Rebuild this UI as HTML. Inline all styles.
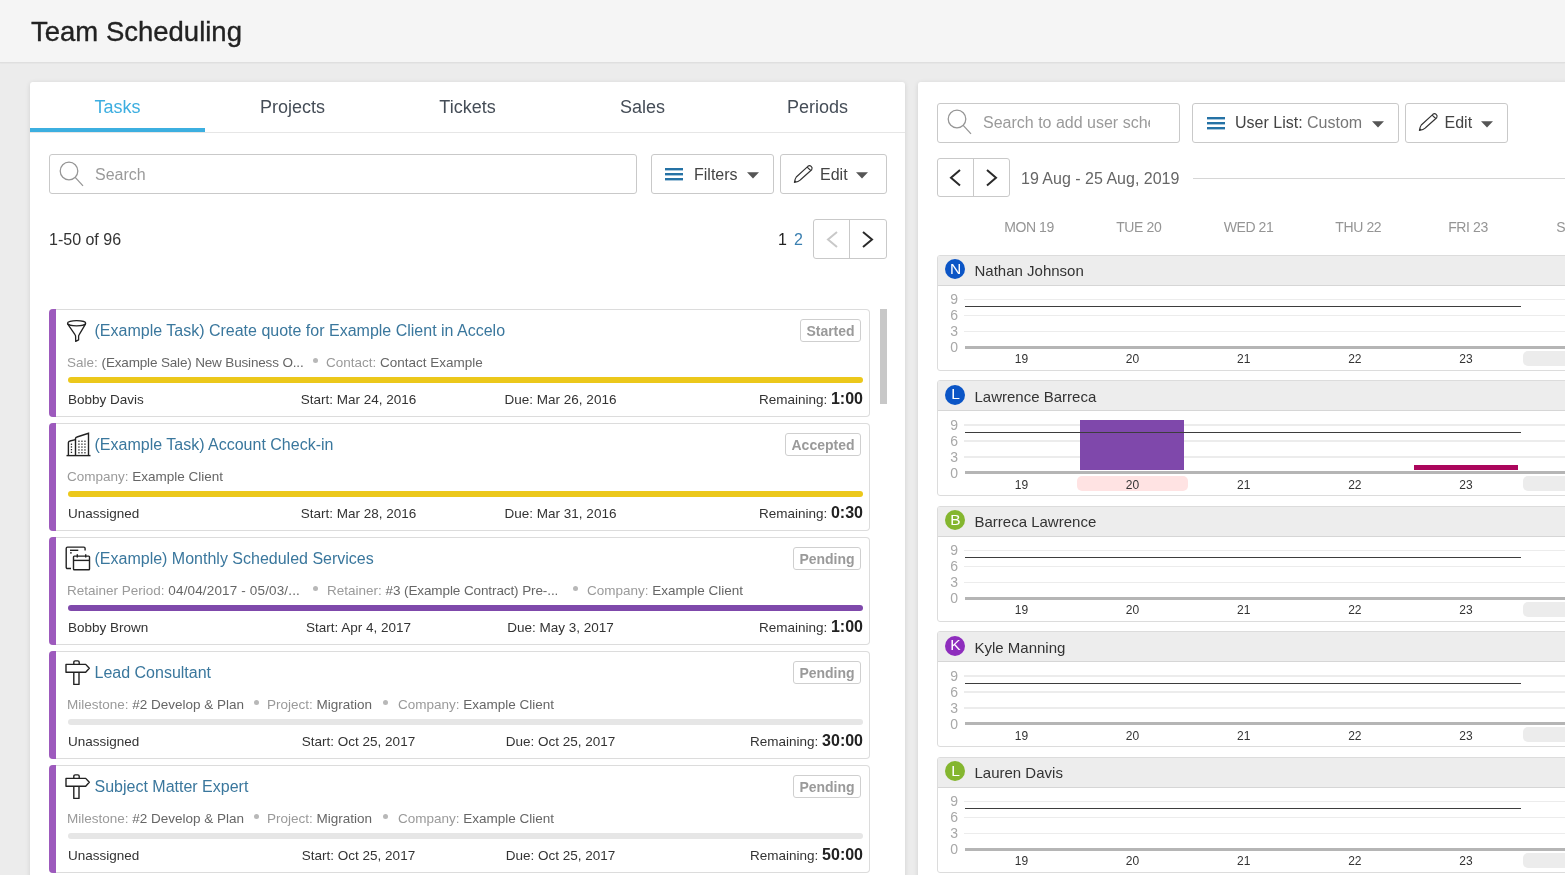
<!DOCTYPE html>
<html><head><meta charset="utf-8"><title>Team Scheduling</title>
<style>
html,body{margin:0;padding:0;}
body{width:1565px;height:875px;overflow:hidden;background:#ececec;position:relative;font-family:"Liberation Sans",sans-serif;}
.t{position:absolute;white-space:nowrap;}
.r{position:absolute;}
svg.r{overflow:visible;}
#w{position:absolute;left:0;top:0;width:1565px;height:875px;overflow:hidden;will-change:transform;}
</style></head><body>
<div id="w">
<div class="r" style="left:0px;top:0px;width:1565px;height:62px;background:#f5f5f5;"></div>
<div class="r" style="left:0px;top:62px;width:1565px;height:1px;background:#dfdfdf;box-shadow:0 1px 1px rgba(0,0,0,0.03);"></div>
<div class="t" style="left:31px;top:18.22px;font-size:27.5px;line-height:27.5px;color:#222;font-weight:normal;-webkit-text-stroke:0.35px #222;">Team Scheduling</div>
<div class="r" style="left:30px;top:82px;width:875px;height:900px;background:#fff;border-radius:3px;box-shadow:0 1px 5px rgba(0,0,0,0.12);"></div>
<div class="t" style="left:117.5px;transform:translateX(-50%);top:97.66px;font-size:18px;line-height:18px;color:#3daee0;font-weight:normal;">Tasks</div>
<div class="t" style="left:292.5px;transform:translateX(-50%);top:97.66px;font-size:18px;line-height:18px;color:#454d57;font-weight:normal;">Projects</div>
<div class="t" style="left:467.5px;transform:translateX(-50%);top:97.66px;font-size:18px;line-height:18px;color:#454d57;font-weight:normal;">Tickets</div>
<div class="t" style="left:642.5px;transform:translateX(-50%);top:97.66px;font-size:18px;line-height:18px;color:#454d57;font-weight:normal;">Sales</div>
<div class="t" style="left:817.5px;transform:translateX(-50%);top:97.66px;font-size:18px;line-height:18px;color:#454d57;font-weight:normal;">Periods</div>
<div class="r" style="left:30px;top:132px;width:875px;height:1px;background:#e6e6e6;"></div>
<div class="r" style="left:30px;top:128px;width:175px;height:4px;background:#3cafe0;"></div>
<div class="r" style="left:49px;top:154px;width:588px;height:40px;box-sizing:border-box;border:1px solid #c9c9c9;border-radius:3px;background:#fff;"></div>
<svg class="r" style="left:58px;top:160.3px" width="28" height="28" viewBox="0 0 28 28"><circle cx="11" cy="11" r="8.8" fill="none" stroke="#959595" stroke-width="1.25"/><line x1="17.2" y1="17.3" x2="25" y2="25.8" stroke="#959595" stroke-width="1.25"/></svg>
<div class="t" style="left:95px;top:167.35px;font-size:16px;line-height:16px;color:#9a9a9a;font-weight:normal;">Search</div>
<div class="r" style="left:651px;top:154px;width:123px;height:40px;box-sizing:border-box;border:1px solid #c9c9c9;border-radius:3px;"></div>
<svg class="r" style="left:665px;top:167px" width="18" height="14" viewBox="0 0 18 14"><rect x="0" y="1" width="18" height="2.4" fill="#2572a5"/><rect x="0" y="6" width="18" height="2.4" fill="#2572a5"/><rect x="0" y="11" width="18" height="2.4" fill="#2572a5"/></svg>
<div class="t" style="left:694px;top:167.35px;font-size:16px;line-height:16px;color:#444;font-weight:normal;">Filters</div>
<svg class="r" style="left:747px;top:171.5px" width="12" height="7" viewBox="0 0 12 7"><path d="M0 0.3H12L6 6.5Z" fill="#555"/></svg>
<div class="r" style="left:780px;top:154px;width:107px;height:40px;box-sizing:border-box;border:1px solid #c9c9c9;border-radius:3px;"></div>
<svg class="r" style="left:794px;top:164px" width="20" height="20" viewBox="0 0 20 20"><path d="M0.4 18.4 Q0.9 14.8 2.3 13 L13.9 2.3 A2.6 2.6 0 0 1 17.7 5.7 L6.5 15.8 Q4.5 17.8 0.4 18.4 Z M13.4 3.3 L16.7 6.5" fill="none" stroke="#333" stroke-width="1.15" stroke-linejoin="round"/><path d="M0.4 18.4 L1 16.3 L2.5 17.8 Z" fill="#333"/></svg>
<div class="t" style="left:820px;top:167.35px;font-size:16px;line-height:16px;color:#444;font-weight:normal;">Edit</div>
<svg class="r" style="left:856px;top:171.5px" width="12" height="7" viewBox="0 0 12 7"><path d="M0 0.3H12L6 6.5Z" fill="#555"/></svg>
<div class="t" style="left:49px;top:232.35px;font-size:16px;line-height:16px;color:#333;font-weight:normal;">1-50 of 96</div>
<div class="t" style="left:778px;top:232.35px;font-size:16px;line-height:16px;color:#222;font-weight:normal;">1</div>
<div class="t" style="left:794px;top:232.35px;font-size:16px;line-height:16px;color:#3a7fb0;font-weight:normal;">2</div>
<div class="r" style="left:813px;top:219px;width:74px;height:40px;box-sizing:border-box;border:1px solid #c9c9c9;border-radius:3px;"></div>
<div class="r" style="left:849px;top:219px;width:1px;height:40px;background:#c9c9c9;"></div>
<svg class="r" style="left:827px;top:230.5px" width="11" height="17" viewBox="0 0 11 17"><path d="M10 1 L1 8.5 L10 16" fill="none" stroke="#c8c8c8" stroke-width="2"/></svg>
<svg class="r" style="left:861.8px;top:230.5px" width="11" height="17" viewBox="0 0 11 17"><path d="M1 1 L10 8.5 L1 16" fill="none" stroke="#2a2a2a" stroke-width="2"/></svg>
<div class="r" style="left:880px;top:309px;width:7px;height:95px;background:#c8c8c8;"></div>
<div class="r" style="left:49px;top:309px;width:821px;height:108px;box-sizing:border-box;border:1px solid #dcdcdc;border-left:none;border-radius:4px;background:#fff;"></div>
<div class="r" style="left:49px;top:309px;width:7px;height:108px;background:#9d5abd;border-radius:4px 0 0 4px;"></div>
<svg class="r" style="left:66px;top:319px" width="22" height="24" viewBox="0 0 22 24"><ellipse cx="10.6" cy="4.3" rx="9.1" ry="2.6" fill="none" stroke="#222" stroke-width="1.3"/><path d="M1.6 4.8 L9 15.6 Q9.6 16.4 9.6 17.6 L9.7 22.4 L12.6 20.9 L12.6 17.6 Q12.6 16.4 13.2 15.6 L19.6 4.8" fill="none" stroke="#222" stroke-width="1.3" stroke-linejoin="round"/></svg>
<div class="t" style="left:94.5px;top:323.45px;font-size:16px;line-height:16px;color:#3a779d;font-weight:normal;">(Example Task) Create quote for Example Client in Accelo</div>
<div class="r" style="left:800px;top:319px;width:61px;height:23px;box-sizing:border-box;border:1px solid #cfcfcf;border-radius:3px;"></div>
<div class="t" style="left:830.5px;transform:translateX(-50%);top:323.95px;font-size:14px;line-height:14px;color:#9a9a9a;font-weight:bold;">Started</div>
<div class="t" style="left:67px;top:355.57px;font-size:13.5px;line-height:13.5px;color:#666;font-weight:normal;"><span style="color:#9a9a9a">Sale:</span> <span style="letter-spacing:-0.16px">(Example Sale) New Business O...</span></div>
<div class="t" style="left:326px;top:355.57px;font-size:13.5px;line-height:13.5px;color:#666;font-weight:normal;"><span style="color:#9a9a9a">Contact:</span> Contact Example</div>
<div class="r" style="left:313px;top:358px;width:5px;height:5px;background:#b8b8b8;border-radius:50%;"></div>
<div class="r" style="left:68px;top:377px;width:795px;height:6px;background:#ecc81b;border-radius:3px;"></div>
<div class="t" style="left:68px;top:392.97px;font-size:13.5px;line-height:13.5px;color:#333;font-weight:normal;">Bobby Davis</div>
<div class="t" style="left:358.5px;transform:translateX(-50%);top:392.97px;font-size:13.5px;line-height:13.5px;color:#333;font-weight:normal;">Start: Mar 24, 2016</div>
<div class="t" style="left:560.5px;transform:translateX(-50%);top:392.97px;font-size:13.5px;line-height:13.5px;color:#333;font-weight:normal;">Due: Mar 26, 2016</div>
<div class="t" style="right:702px;top:391.97px;font-size:13.5px;line-height:13.5px;color:#333;font-weight:normal;">Remaining: <b style="font-size:16px;color:#222">1:00</b></div>
<div class="r" style="left:49px;top:423px;width:821px;height:108px;box-sizing:border-box;border:1px solid #dcdcdc;border-left:none;border-radius:4px;background:#fff;"></div>
<div class="r" style="left:49px;top:423px;width:7px;height:108px;background:#9d5abd;border-radius:4px 0 0 4px;"></div>
<svg class="r" style="left:65.7px;top:431px" width="26" height="26" viewBox="0 0 26 26"><g fill="none" stroke="#222" stroke-width="1.4"><path d="M0.5 24.6 H24.5"/><path d="M2.4 24.6 V11.6 Q2.6 10.3 4 10 L9.5 8.6"/><path d="M9.5 24.6 V7.4 Q9.7 6.3 11 6 L22.5 2.3 V24.6"/></g><g fill="#222"><rect x="4.8" y="12.6" width="1.3" height="1.3"/><rect x="4.8" y="15.3" width="1.3" height="1.3"/><rect x="4.8" y="18" width="1.3" height="1.3"/><rect x="4.8" y="20.7" width="1.3" height="1.3"/><rect x="12.3" y="9.6" width="1.3" height="1.3"/><rect x="15.3" y="9.6" width="1.3" height="1.3"/><rect x="18.3" y="9.6" width="1.3" height="1.3"/><rect x="12.3" y="12.5" width="1.3" height="1.3"/><rect x="15.3" y="12.5" width="1.3" height="1.3"/><rect x="18.3" y="12.5" width="1.3" height="1.3"/><rect x="12.3" y="15.4" width="1.3" height="1.3"/><rect x="15.3" y="15.4" width="1.3" height="1.3"/><rect x="18.3" y="15.4" width="1.3" height="1.3"/><rect x="12.3" y="18.3" width="1.3" height="1.3"/><rect x="15.3" y="18.3" width="1.3" height="1.3"/><rect x="18.3" y="18.3" width="1.3" height="1.3"/><rect x="12.3" y="21.1" width="1.3" height="1.3"/><rect x="15.3" y="21.1" width="1.3" height="1.3"/><rect x="18.3" y="21.1" width="1.3" height="1.3"/></g></svg>
<div class="t" style="left:94.5px;top:437.45px;font-size:16px;line-height:16px;color:#3a779d;font-weight:normal;">(Example Task) Account Check-in</div>
<div class="r" style="left:785px;top:433px;width:76px;height:23px;box-sizing:border-box;border:1px solid #cfcfcf;border-radius:3px;"></div>
<div class="t" style="left:823.0px;transform:translateX(-50%);top:437.95px;font-size:14px;line-height:14px;color:#9a9a9a;font-weight:bold;">Accepted</div>
<div class="t" style="left:67px;top:469.57px;font-size:13.5px;line-height:13.5px;color:#666;font-weight:normal;"><span style="color:#9a9a9a">Company:</span> Example Client</div>
<div class="r" style="left:68px;top:491px;width:795px;height:6px;background:#ecc81b;border-radius:3px;"></div>
<div class="t" style="left:68px;top:506.97px;font-size:13.5px;line-height:13.5px;color:#333;font-weight:normal;">Unassigned</div>
<div class="t" style="left:358.5px;transform:translateX(-50%);top:506.97px;font-size:13.5px;line-height:13.5px;color:#333;font-weight:normal;">Start: Mar 28, 2016</div>
<div class="t" style="left:560.5px;transform:translateX(-50%);top:506.97px;font-size:13.5px;line-height:13.5px;color:#333;font-weight:normal;">Due: Mar 31, 2016</div>
<div class="t" style="right:702px;top:505.97px;font-size:13.5px;line-height:13.5px;color:#333;font-weight:normal;">Remaining: <b style="font-size:16px;color:#222">0:30</b></div>
<div class="r" style="left:49px;top:537px;width:821px;height:108px;box-sizing:border-box;border:1px solid #dcdcdc;border-left:none;border-radius:4px;background:#fff;"></div>
<div class="r" style="left:49px;top:537px;width:7px;height:108px;background:#9d5abd;border-radius:4px 0 0 4px;"></div>
<svg class="r" style="left:64.5px;top:545.5px" width="26" height="26" viewBox="0 0 26 26"><g fill="none" stroke="#222" stroke-width="1.4" stroke-linejoin="round"><path d="M6 22.5 H2.5 Q1.2 22.5 1.2 21.2 V2.4 Q1.2 1.1 2.5 1.1 H18.8 Q20.1 1.1 20.1 2.4 V4.6"/><path d="M5 4.3 H13.3"/><path d="M5 6.9 H6.8"/><rect x="8.5" y="10.1" width="16" height="13.6" rx="0.8"/><path d="M8.5 14.4 H24.5"/><path d="M12.3 8.3 V11.4 M20.7 8.3 V11.4"/></g></svg>
<div class="t" style="left:94.5px;top:551.45px;font-size:16px;line-height:16px;color:#3a779d;font-weight:normal;">(Example) Monthly Scheduled Services</div>
<div class="r" style="left:793px;top:547px;width:68px;height:23px;box-sizing:border-box;border:1px solid #cfcfcf;border-radius:3px;"></div>
<div class="t" style="left:827.0px;transform:translateX(-50%);top:551.95px;font-size:14px;line-height:14px;color:#9a9a9a;font-weight:bold;">Pending</div>
<div class="t" style="left:67px;top:583.57px;font-size:13.5px;line-height:13.5px;color:#666;font-weight:normal;"><span style="color:#9a9a9a">Retainer Period:</span> <span style="letter-spacing:0.15px">04/04/2017 - 05/03/...</span></div>
<div class="t" style="left:327px;top:583.57px;font-size:13.5px;line-height:13.5px;color:#666;font-weight:normal;"><span style="color:#9a9a9a">Retainer:</span> <span style="letter-spacing:-0.1px">#3 (Example Contract) Pre-...</span></div>
<div class="t" style="left:587px;top:583.57px;font-size:13.5px;line-height:13.5px;color:#666;font-weight:normal;"><span style="color:#9a9a9a">Company:</span> Example Client</div>
<div class="r" style="left:313px;top:586px;width:5px;height:5px;background:#b8b8b8;border-radius:50%;"></div>
<div class="r" style="left:573px;top:586px;width:5px;height:5px;background:#b8b8b8;border-radius:50%;"></div>
<div class="r" style="left:68px;top:605px;width:795px;height:6px;background:#7f49ab;border-radius:3px;"></div>
<div class="t" style="left:68px;top:620.97px;font-size:13.5px;line-height:13.5px;color:#333;font-weight:normal;">Bobby Brown</div>
<div class="t" style="left:358.5px;transform:translateX(-50%);top:620.97px;font-size:13.5px;line-height:13.5px;color:#333;font-weight:normal;">Start: Apr 4, 2017</div>
<div class="t" style="left:560.5px;transform:translateX(-50%);top:620.97px;font-size:13.5px;line-height:13.5px;color:#333;font-weight:normal;">Due: May 3, 2017</div>
<div class="t" style="right:702px;top:619.97px;font-size:13.5px;line-height:13.5px;color:#333;font-weight:normal;">Remaining: <b style="font-size:16px;color:#222">1:00</b></div>
<div class="r" style="left:49px;top:651px;width:821px;height:108px;box-sizing:border-box;border:1px solid #dcdcdc;border-left:none;border-radius:4px;background:#fff;"></div>
<div class="r" style="left:49px;top:651px;width:7px;height:108px;background:#9d5abd;border-radius:4px 0 0 4px;"></div>
<svg class="r" style="left:64.5px;top:659.5px" width="26" height="26" viewBox="0 0 26 26"><g fill="none" stroke="#222" stroke-width="1.4" stroke-linejoin="round"><path d="M8.8 4.4 V2.3 Q8.8 0.9 10.2 0.9 H12.8 Q14.2 0.9 14.2 2.3 V4.4"/><path d="M1 4.4 H20.7 L24.3 8.3 L20.7 12.2 H1 Z"/><path d="M8.8 12.2 V24.4 H14 V12.2"/></g></svg>
<div class="t" style="left:94.5px;top:665.45px;font-size:16px;line-height:16px;color:#3a779d;font-weight:normal;">Lead Consultant</div>
<div class="r" style="left:793px;top:661px;width:68px;height:23px;box-sizing:border-box;border:1px solid #cfcfcf;border-radius:3px;"></div>
<div class="t" style="left:827.0px;transform:translateX(-50%);top:665.95px;font-size:14px;line-height:14px;color:#9a9a9a;font-weight:bold;">Pending</div>
<div class="t" style="left:67px;top:697.57px;font-size:13.5px;line-height:13.5px;color:#666;font-weight:normal;"><span style="color:#9a9a9a">Milestone:</span> #2 Develop &amp; Plan</div>
<div class="t" style="left:267px;top:697.57px;font-size:13.5px;line-height:13.5px;color:#666;font-weight:normal;"><span style="color:#9a9a9a">Project:</span> Migration</div>
<div class="t" style="left:398px;top:697.57px;font-size:13.5px;line-height:13.5px;color:#666;font-weight:normal;"><span style="color:#9a9a9a">Company:</span> Example Client</div>
<div class="r" style="left:254px;top:700px;width:5px;height:5px;background:#b8b8b8;border-radius:50%;"></div>
<div class="r" style="left:383px;top:700px;width:5px;height:5px;background:#b8b8b8;border-radius:50%;"></div>
<div class="r" style="left:68px;top:719px;width:795px;height:6px;background:#e6e6e6;border-radius:3px;"></div>
<div class="t" style="left:68px;top:734.97px;font-size:13.5px;line-height:13.5px;color:#333;font-weight:normal;">Unassigned</div>
<div class="t" style="left:358.5px;transform:translateX(-50%);top:734.97px;font-size:13.5px;line-height:13.5px;color:#333;font-weight:normal;">Start: Oct 25, 2017</div>
<div class="t" style="left:560.5px;transform:translateX(-50%);top:734.97px;font-size:13.5px;line-height:13.5px;color:#333;font-weight:normal;">Due: Oct 25, 2017</div>
<div class="t" style="right:702px;top:733.97px;font-size:13.5px;line-height:13.5px;color:#333;font-weight:normal;">Remaining: <b style="font-size:16px;color:#222">30:00</b></div>
<div class="r" style="left:49px;top:765px;width:821px;height:108px;box-sizing:border-box;border:1px solid #dcdcdc;border-left:none;border-radius:4px;background:#fff;"></div>
<div class="r" style="left:49px;top:765px;width:7px;height:108px;background:#9d5abd;border-radius:4px 0 0 4px;"></div>
<svg class="r" style="left:64.5px;top:773.5px" width="26" height="26" viewBox="0 0 26 26"><g fill="none" stroke="#222" stroke-width="1.4" stroke-linejoin="round"><path d="M8.8 4.4 V2.3 Q8.8 0.9 10.2 0.9 H12.8 Q14.2 0.9 14.2 2.3 V4.4"/><path d="M1 4.4 H20.7 L24.3 8.3 L20.7 12.2 H1 Z"/><path d="M8.8 12.2 V24.4 H14 V12.2"/></g></svg>
<div class="t" style="left:94.5px;top:779.45px;font-size:16px;line-height:16px;color:#3a779d;font-weight:normal;">Subject Matter Expert</div>
<div class="r" style="left:793px;top:775px;width:68px;height:23px;box-sizing:border-box;border:1px solid #cfcfcf;border-radius:3px;"></div>
<div class="t" style="left:827.0px;transform:translateX(-50%);top:779.95px;font-size:14px;line-height:14px;color:#9a9a9a;font-weight:bold;">Pending</div>
<div class="t" style="left:67px;top:811.57px;font-size:13.5px;line-height:13.5px;color:#666;font-weight:normal;"><span style="color:#9a9a9a">Milestone:</span> #2 Develop &amp; Plan</div>
<div class="t" style="left:267px;top:811.57px;font-size:13.5px;line-height:13.5px;color:#666;font-weight:normal;"><span style="color:#9a9a9a">Project:</span> Migration</div>
<div class="t" style="left:398px;top:811.57px;font-size:13.5px;line-height:13.5px;color:#666;font-weight:normal;"><span style="color:#9a9a9a">Company:</span> Example Client</div>
<div class="r" style="left:254px;top:814px;width:5px;height:5px;background:#b8b8b8;border-radius:50%;"></div>
<div class="r" style="left:383px;top:814px;width:5px;height:5px;background:#b8b8b8;border-radius:50%;"></div>
<div class="r" style="left:68px;top:833px;width:795px;height:6px;background:#e6e6e6;border-radius:3px;"></div>
<div class="t" style="left:68px;top:848.97px;font-size:13.5px;line-height:13.5px;color:#333;font-weight:normal;">Unassigned</div>
<div class="t" style="left:358.5px;transform:translateX(-50%);top:848.97px;font-size:13.5px;line-height:13.5px;color:#333;font-weight:normal;">Start: Oct 25, 2017</div>
<div class="t" style="left:560.5px;transform:translateX(-50%);top:848.97px;font-size:13.5px;line-height:13.5px;color:#333;font-weight:normal;">Due: Oct 25, 2017</div>
<div class="t" style="right:702px;top:847.97px;font-size:13.5px;line-height:13.5px;color:#333;font-weight:normal;">Remaining: <b style="font-size:16px;color:#222">50:00</b></div>
<div class="r" style="left:918px;top:82px;width:700px;height:900px;background:#fff;border-radius:3px;box-shadow:0 1px 5px rgba(0,0,0,0.12);"></div>
<div class="r" style="left:937px;top:103px;width:243px;height:40px;box-sizing:border-box;border:1px solid #c9c9c9;border-radius:3px;"></div>
<svg class="r" style="left:946.4px;top:108.4px" width="28" height="28" viewBox="0 0 28 28"><circle cx="11" cy="11" r="8.8" fill="none" stroke="#959595" stroke-width="1.25"/><line x1="17.2" y1="17.3" x2="25" y2="25.8" stroke="#959595" stroke-width="1.25"/></svg>
<div class="r" style="left:983px;top:103px;width:167px;height:40px;overflow:hidden">
<div class="t" style="left:0px;top:12.15px;font-size:16px;line-height:16px;color:#9a9a9a;font-weight:normal;">Search to add user sche</div>
</div>
<div class="r" style="left:1192px;top:103px;width:207px;height:40px;box-sizing:border-box;border:1px solid #c9c9c9;border-radius:3px;"></div>
<svg class="r" style="left:1207px;top:115.5px" width="18" height="14" viewBox="0 0 18 14"><rect x="0" y="1" width="18" height="2.4" fill="#2572a5"/><rect x="0" y="6" width="18" height="2.4" fill="#2572a5"/><rect x="0" y="11" width="18" height="2.4" fill="#2572a5"/></svg>
<div class="t" style="left:1235px;top:115.15px;font-size:16px;line-height:16px;color:#444;font-weight:normal;">User List: <span style="color:#777">Custom</span></div>
<svg class="r" style="left:1372px;top:120.5px" width="12" height="7" viewBox="0 0 12 7"><path d="M0 0.3H12L6 6.5Z" fill="#555"/></svg>
<div class="r" style="left:1405px;top:103px;width:103px;height:40px;box-sizing:border-box;border:1px solid #c9c9c9;border-radius:3px;"></div>
<svg class="r" style="left:1419px;top:111.7px" width="20" height="20" viewBox="0 0 20 20"><path d="M0.4 18.4 Q0.9 14.8 2.3 13 L13.9 2.3 A2.6 2.6 0 0 1 17.7 5.7 L6.5 15.8 Q4.5 17.8 0.4 18.4 Z M13.4 3.3 L16.7 6.5" fill="none" stroke="#333" stroke-width="1.15" stroke-linejoin="round"/><path d="M0.4 18.4 L1 16.3 L2.5 17.8 Z" fill="#333"/></svg>
<div class="t" style="left:1444.5px;top:115.15px;font-size:16px;line-height:16px;color:#444;font-weight:normal;">Edit</div>
<svg class="r" style="left:1481px;top:120.5px" width="12" height="7" viewBox="0 0 12 7"><path d="M0 0.3H12L6 6.5Z" fill="#555"/></svg>
<div class="r" style="left:937px;top:158px;width:73px;height:39px;box-sizing:border-box;border:1px solid #c9c9c9;border-radius:3px;"></div>
<div class="r" style="left:973px;top:158px;width:1px;height:39px;background:#c9c9c9;"></div>
<svg class="r" style="left:949.5px;top:169px" width="11" height="17.5" viewBox="0 0 11 17.5"><path d="M10 1 L1 8.75 L10 16.5" fill="none" stroke="#2a2a2a" stroke-width="2"/></svg>
<svg class="r" style="left:986px;top:169px" width="11" height="17.5" viewBox="0 0 11 17.5"><path d="M1 1 L10 8.75 L1 16.5" fill="none" stroke="#2a2a2a" stroke-width="2"/></svg>
<div class="t" style="left:1021px;top:170.65px;font-size:16px;line-height:16px;color:#666;font-weight:normal;">19 Aug - 25 Aug, 2019</div>
<div class="r" style="left:1193px;top:178px;width:400px;height:1px;background:#d6d6d6;"></div>
<div class="t" style="left:1029.0px;transform:translateX(-50%);top:220.45px;font-size:14px;line-height:14px;color:#959595;font-weight:normal;letter-spacing:-0.4px;">MON 19</div>
<div class="t" style="left:1138.75px;transform:translateX(-50%);top:220.45px;font-size:14px;line-height:14px;color:#959595;font-weight:normal;letter-spacing:-0.4px;">TUE 20</div>
<div class="t" style="left:1248.5px;transform:translateX(-50%);top:220.45px;font-size:14px;line-height:14px;color:#959595;font-weight:normal;letter-spacing:-0.4px;">WED 21</div>
<div class="t" style="left:1358.25px;transform:translateX(-50%);top:220.45px;font-size:14px;line-height:14px;color:#959595;font-weight:normal;letter-spacing:-0.4px;">THU 22</div>
<div class="t" style="left:1468.0px;transform:translateX(-50%);top:220.45px;font-size:14px;line-height:14px;color:#959595;font-weight:normal;letter-spacing:-0.4px;">FRI 23</div>
<div class="t" style="left:1577.75px;transform:translateX(-50%);top:220.45px;font-size:14px;line-height:14px;color:#959595;font-weight:normal;letter-spacing:-0.4px;">SAT 24</div>
<div class="r" style="left:937px;top:254.5px;width:700px;height:116px;box-sizing:border-box;border:1px solid #dcdcdc;border-radius:3px;background:#fff;"></div>
<div class="r" style="left:938px;top:255.5px;width:700px;height:29.5px;background:#ededed;border-radius:2px 0 0 0;"></div>
<div class="r" style="left:938px;top:284.5px;width:700px;height:1px;background:#d6d6d6;"></div>
<div class="r" style="left:945px;top:259.0px;width:20px;height:20px;background:#0b55c6;border-radius:50%;"></div>
<div class="t" style="left:955.5px;transform:translateX(-50%);top:260.88px;font-size:15.5px;line-height:15.5px;color:#fff;font-weight:normal;">N</div>
<div class="t" style="left:974.5px;top:263.00px;font-size:15px;line-height:15px;color:#333;font-weight:normal;">Nathan Johnson</div>
<div class="t" style="right:607px;top:292.15px;font-size:14px;line-height:14px;color:#a8a8a8;font-weight:normal;">9</div>
<div class="r" style="left:964px;top:298.7px;width:700px;height:1.6px;background:#ececec;"></div>
<div class="t" style="right:607px;top:308.15px;font-size:14px;line-height:14px;color:#a8a8a8;font-weight:normal;">6</div>
<div class="r" style="left:964px;top:314.7px;width:700px;height:1.6px;background:#ececec;"></div>
<div class="t" style="right:607px;top:324.15px;font-size:14px;line-height:14px;color:#a8a8a8;font-weight:normal;">3</div>
<div class="r" style="left:964px;top:330.7px;width:700px;height:1.6px;background:#ececec;"></div>
<div class="t" style="right:607px;top:340.15px;font-size:14px;line-height:14px;color:#a8a8a8;font-weight:normal;">0</div>
<div class="r" style="left:965px;top:345.5px;width:700px;height:3px;background:#b5b5b5;"></div>
<div class="r" style="left:965px;top:306.0px;width:556px;height:1.4px;background:#3d3d3d;"></div>
<div class="r" style="left:1523px;top:350.5px;width:100px;height:15px;background:#ececec;border-radius:5px;"></div>
<div class="t" style="left:1021.4px;transform:translateX(-50%);top:353.04px;font-size:12px;line-height:12px;color:#333;font-weight:normal;">19</div>
<div class="t" style="left:1132.55px;transform:translateX(-50%);top:353.04px;font-size:12px;line-height:12px;color:#333;font-weight:normal;">20</div>
<div class="t" style="left:1243.7px;transform:translateX(-50%);top:353.04px;font-size:12px;line-height:12px;color:#333;font-weight:normal;">21</div>
<div class="t" style="left:1354.85px;transform:translateX(-50%);top:353.04px;font-size:12px;line-height:12px;color:#333;font-weight:normal;">22</div>
<div class="t" style="left:1466.0px;transform:translateX(-50%);top:353.04px;font-size:12px;line-height:12px;color:#333;font-weight:normal;">23</div>
<div class="r" style="left:937px;top:380.0px;width:700px;height:116px;box-sizing:border-box;border:1px solid #dcdcdc;border-radius:3px;background:#fff;"></div>
<div class="r" style="left:938px;top:381.0px;width:700px;height:29.5px;background:#ededed;border-radius:2px 0 0 0;"></div>
<div class="r" style="left:938px;top:410.0px;width:700px;height:1px;background:#d6d6d6;"></div>
<div class="r" style="left:945px;top:384.5px;width:20px;height:20px;background:#0b55c6;border-radius:50%;"></div>
<div class="t" style="left:955.5px;transform:translateX(-50%);top:386.38px;font-size:15.5px;line-height:15.5px;color:#fff;font-weight:normal;">L</div>
<div class="t" style="left:974.5px;top:388.50px;font-size:15px;line-height:15px;color:#333;font-weight:normal;">Lawrence Barreca</div>
<div class="t" style="right:607px;top:417.65px;font-size:14px;line-height:14px;color:#a8a8a8;font-weight:normal;">9</div>
<div class="r" style="left:964px;top:424.2px;width:700px;height:1.6px;background:#ececec;"></div>
<div class="t" style="right:607px;top:433.65px;font-size:14px;line-height:14px;color:#a8a8a8;font-weight:normal;">6</div>
<div class="r" style="left:964px;top:440.2px;width:700px;height:1.6px;background:#ececec;"></div>
<div class="t" style="right:607px;top:449.65px;font-size:14px;line-height:14px;color:#a8a8a8;font-weight:normal;">3</div>
<div class="r" style="left:964px;top:456.2px;width:700px;height:1.6px;background:#ececec;"></div>
<div class="t" style="right:607px;top:465.65px;font-size:14px;line-height:14px;color:#a8a8a8;font-weight:normal;">0</div>
<div class="r" style="left:965px;top:471.0px;width:700px;height:3px;background:#b5b5b5;"></div>
<div class="r" style="left:1080px;top:419.5px;width:104px;height:50px;background:#7f48ab;"></div>
<div class="r" style="left:1414px;top:464.5px;width:104px;height:5px;background:#ab065c;"></div>
<div class="r" style="left:1077px;top:475.7px;width:111px;height:15px;background:#ffe3e3;border-radius:5px;"></div>
<div class="r" style="left:965px;top:431.5px;width:556px;height:1.4px;background:#3d3d3d;"></div>
<div class="r" style="left:1523px;top:476.0px;width:100px;height:15px;background:#ececec;border-radius:5px;"></div>
<div class="t" style="left:1021.4px;transform:translateX(-50%);top:478.54px;font-size:12px;line-height:12px;color:#333;font-weight:normal;">19</div>
<div class="t" style="left:1132.55px;transform:translateX(-50%);top:478.54px;font-size:12px;line-height:12px;color:#333;font-weight:normal;">20</div>
<div class="t" style="left:1243.7px;transform:translateX(-50%);top:478.54px;font-size:12px;line-height:12px;color:#333;font-weight:normal;">21</div>
<div class="t" style="left:1354.85px;transform:translateX(-50%);top:478.54px;font-size:12px;line-height:12px;color:#333;font-weight:normal;">22</div>
<div class="t" style="left:1466.0px;transform:translateX(-50%);top:478.54px;font-size:12px;line-height:12px;color:#333;font-weight:normal;">23</div>
<div class="r" style="left:937px;top:505.5px;width:700px;height:116px;box-sizing:border-box;border:1px solid #dcdcdc;border-radius:3px;background:#fff;"></div>
<div class="r" style="left:938px;top:506.5px;width:700px;height:29.5px;background:#ededed;border-radius:2px 0 0 0;"></div>
<div class="r" style="left:938px;top:535.5px;width:700px;height:1px;background:#d6d6d6;"></div>
<div class="r" style="left:945px;top:510.0px;width:20px;height:20px;background:#84b62f;border-radius:50%;"></div>
<div class="t" style="left:955.5px;transform:translateX(-50%);top:511.88px;font-size:15.5px;line-height:15.5px;color:#fff;font-weight:normal;">B</div>
<div class="t" style="left:974.5px;top:514.00px;font-size:15px;line-height:15px;color:#333;font-weight:normal;">Barreca Lawrence</div>
<div class="t" style="right:607px;top:543.15px;font-size:14px;line-height:14px;color:#a8a8a8;font-weight:normal;">9</div>
<div class="r" style="left:964px;top:549.7px;width:700px;height:1.6px;background:#ececec;"></div>
<div class="t" style="right:607px;top:559.15px;font-size:14px;line-height:14px;color:#a8a8a8;font-weight:normal;">6</div>
<div class="r" style="left:964px;top:565.7px;width:700px;height:1.6px;background:#ececec;"></div>
<div class="t" style="right:607px;top:575.15px;font-size:14px;line-height:14px;color:#a8a8a8;font-weight:normal;">3</div>
<div class="r" style="left:964px;top:581.7px;width:700px;height:1.6px;background:#ececec;"></div>
<div class="t" style="right:607px;top:591.15px;font-size:14px;line-height:14px;color:#a8a8a8;font-weight:normal;">0</div>
<div class="r" style="left:965px;top:596.5px;width:700px;height:3px;background:#b5b5b5;"></div>
<div class="r" style="left:965px;top:557.0px;width:556px;height:1.4px;background:#3d3d3d;"></div>
<div class="r" style="left:1523px;top:601.5px;width:100px;height:15px;background:#ececec;border-radius:5px;"></div>
<div class="t" style="left:1021.4px;transform:translateX(-50%);top:604.04px;font-size:12px;line-height:12px;color:#333;font-weight:normal;">19</div>
<div class="t" style="left:1132.55px;transform:translateX(-50%);top:604.04px;font-size:12px;line-height:12px;color:#333;font-weight:normal;">20</div>
<div class="t" style="left:1243.7px;transform:translateX(-50%);top:604.04px;font-size:12px;line-height:12px;color:#333;font-weight:normal;">21</div>
<div class="t" style="left:1354.85px;transform:translateX(-50%);top:604.04px;font-size:12px;line-height:12px;color:#333;font-weight:normal;">22</div>
<div class="t" style="left:1466.0px;transform:translateX(-50%);top:604.04px;font-size:12px;line-height:12px;color:#333;font-weight:normal;">23</div>
<div class="r" style="left:937px;top:631.0px;width:700px;height:116px;box-sizing:border-box;border:1px solid #dcdcdc;border-radius:3px;background:#fff;"></div>
<div class="r" style="left:938px;top:632.0px;width:700px;height:29.5px;background:#ededed;border-radius:2px 0 0 0;"></div>
<div class="r" style="left:938px;top:661.0px;width:700px;height:1px;background:#d6d6d6;"></div>
<div class="r" style="left:945px;top:635.5px;width:20px;height:20px;background:#8e2dbd;border-radius:50%;"></div>
<div class="t" style="left:955.5px;transform:translateX(-50%);top:637.38px;font-size:15.5px;line-height:15.5px;color:#fff;font-weight:normal;">K</div>
<div class="t" style="left:974.5px;top:639.50px;font-size:15px;line-height:15px;color:#333;font-weight:normal;">Kyle Manning</div>
<div class="t" style="right:607px;top:668.65px;font-size:14px;line-height:14px;color:#a8a8a8;font-weight:normal;">9</div>
<div class="r" style="left:964px;top:675.2px;width:700px;height:1.6px;background:#ececec;"></div>
<div class="t" style="right:607px;top:684.65px;font-size:14px;line-height:14px;color:#a8a8a8;font-weight:normal;">6</div>
<div class="r" style="left:964px;top:691.2px;width:700px;height:1.6px;background:#ececec;"></div>
<div class="t" style="right:607px;top:700.65px;font-size:14px;line-height:14px;color:#a8a8a8;font-weight:normal;">3</div>
<div class="r" style="left:964px;top:707.2px;width:700px;height:1.6px;background:#ececec;"></div>
<div class="t" style="right:607px;top:716.65px;font-size:14px;line-height:14px;color:#a8a8a8;font-weight:normal;">0</div>
<div class="r" style="left:965px;top:722.0px;width:700px;height:3px;background:#b5b5b5;"></div>
<div class="r" style="left:965px;top:682.5px;width:556px;height:1.4px;background:#3d3d3d;"></div>
<div class="r" style="left:1523px;top:727.0px;width:100px;height:15px;background:#ececec;border-radius:5px;"></div>
<div class="t" style="left:1021.4px;transform:translateX(-50%);top:729.54px;font-size:12px;line-height:12px;color:#333;font-weight:normal;">19</div>
<div class="t" style="left:1132.55px;transform:translateX(-50%);top:729.54px;font-size:12px;line-height:12px;color:#333;font-weight:normal;">20</div>
<div class="t" style="left:1243.7px;transform:translateX(-50%);top:729.54px;font-size:12px;line-height:12px;color:#333;font-weight:normal;">21</div>
<div class="t" style="left:1354.85px;transform:translateX(-50%);top:729.54px;font-size:12px;line-height:12px;color:#333;font-weight:normal;">22</div>
<div class="t" style="left:1466.0px;transform:translateX(-50%);top:729.54px;font-size:12px;line-height:12px;color:#333;font-weight:normal;">23</div>
<div class="r" style="left:937px;top:756.5px;width:700px;height:116px;box-sizing:border-box;border:1px solid #dcdcdc;border-radius:3px;background:#fff;"></div>
<div class="r" style="left:938px;top:757.5px;width:700px;height:29.5px;background:#ededed;border-radius:2px 0 0 0;"></div>
<div class="r" style="left:938px;top:786.5px;width:700px;height:1px;background:#d6d6d6;"></div>
<div class="r" style="left:945px;top:761.0px;width:20px;height:20px;background:#84b62f;border-radius:50%;"></div>
<div class="t" style="left:955.5px;transform:translateX(-50%);top:762.88px;font-size:15.5px;line-height:15.5px;color:#fff;font-weight:normal;">L</div>
<div class="t" style="left:974.5px;top:765.00px;font-size:15px;line-height:15px;color:#333;font-weight:normal;">Lauren Davis</div>
<div class="t" style="right:607px;top:794.15px;font-size:14px;line-height:14px;color:#a8a8a8;font-weight:normal;">9</div>
<div class="r" style="left:964px;top:800.7px;width:700px;height:1.6px;background:#ececec;"></div>
<div class="t" style="right:607px;top:810.15px;font-size:14px;line-height:14px;color:#a8a8a8;font-weight:normal;">6</div>
<div class="r" style="left:964px;top:816.7px;width:700px;height:1.6px;background:#ececec;"></div>
<div class="t" style="right:607px;top:826.15px;font-size:14px;line-height:14px;color:#a8a8a8;font-weight:normal;">3</div>
<div class="r" style="left:964px;top:832.7px;width:700px;height:1.6px;background:#ececec;"></div>
<div class="t" style="right:607px;top:842.15px;font-size:14px;line-height:14px;color:#a8a8a8;font-weight:normal;">0</div>
<div class="r" style="left:965px;top:847.5px;width:700px;height:3px;background:#b5b5b5;"></div>
<div class="r" style="left:965px;top:808.0px;width:556px;height:1.4px;background:#3d3d3d;"></div>
<div class="r" style="left:1523px;top:852.5px;width:100px;height:15px;background:#ececec;border-radius:5px;"></div>
<div class="t" style="left:1021.4px;transform:translateX(-50%);top:855.04px;font-size:12px;line-height:12px;color:#333;font-weight:normal;">19</div>
<div class="t" style="left:1132.55px;transform:translateX(-50%);top:855.04px;font-size:12px;line-height:12px;color:#333;font-weight:normal;">20</div>
<div class="t" style="left:1243.7px;transform:translateX(-50%);top:855.04px;font-size:12px;line-height:12px;color:#333;font-weight:normal;">21</div>
<div class="t" style="left:1354.85px;transform:translateX(-50%);top:855.04px;font-size:12px;line-height:12px;color:#333;font-weight:normal;">22</div>
<div class="t" style="left:1466.0px;transform:translateX(-50%);top:855.04px;font-size:12px;line-height:12px;color:#333;font-weight:normal;">23</div>
</div></body></html>
